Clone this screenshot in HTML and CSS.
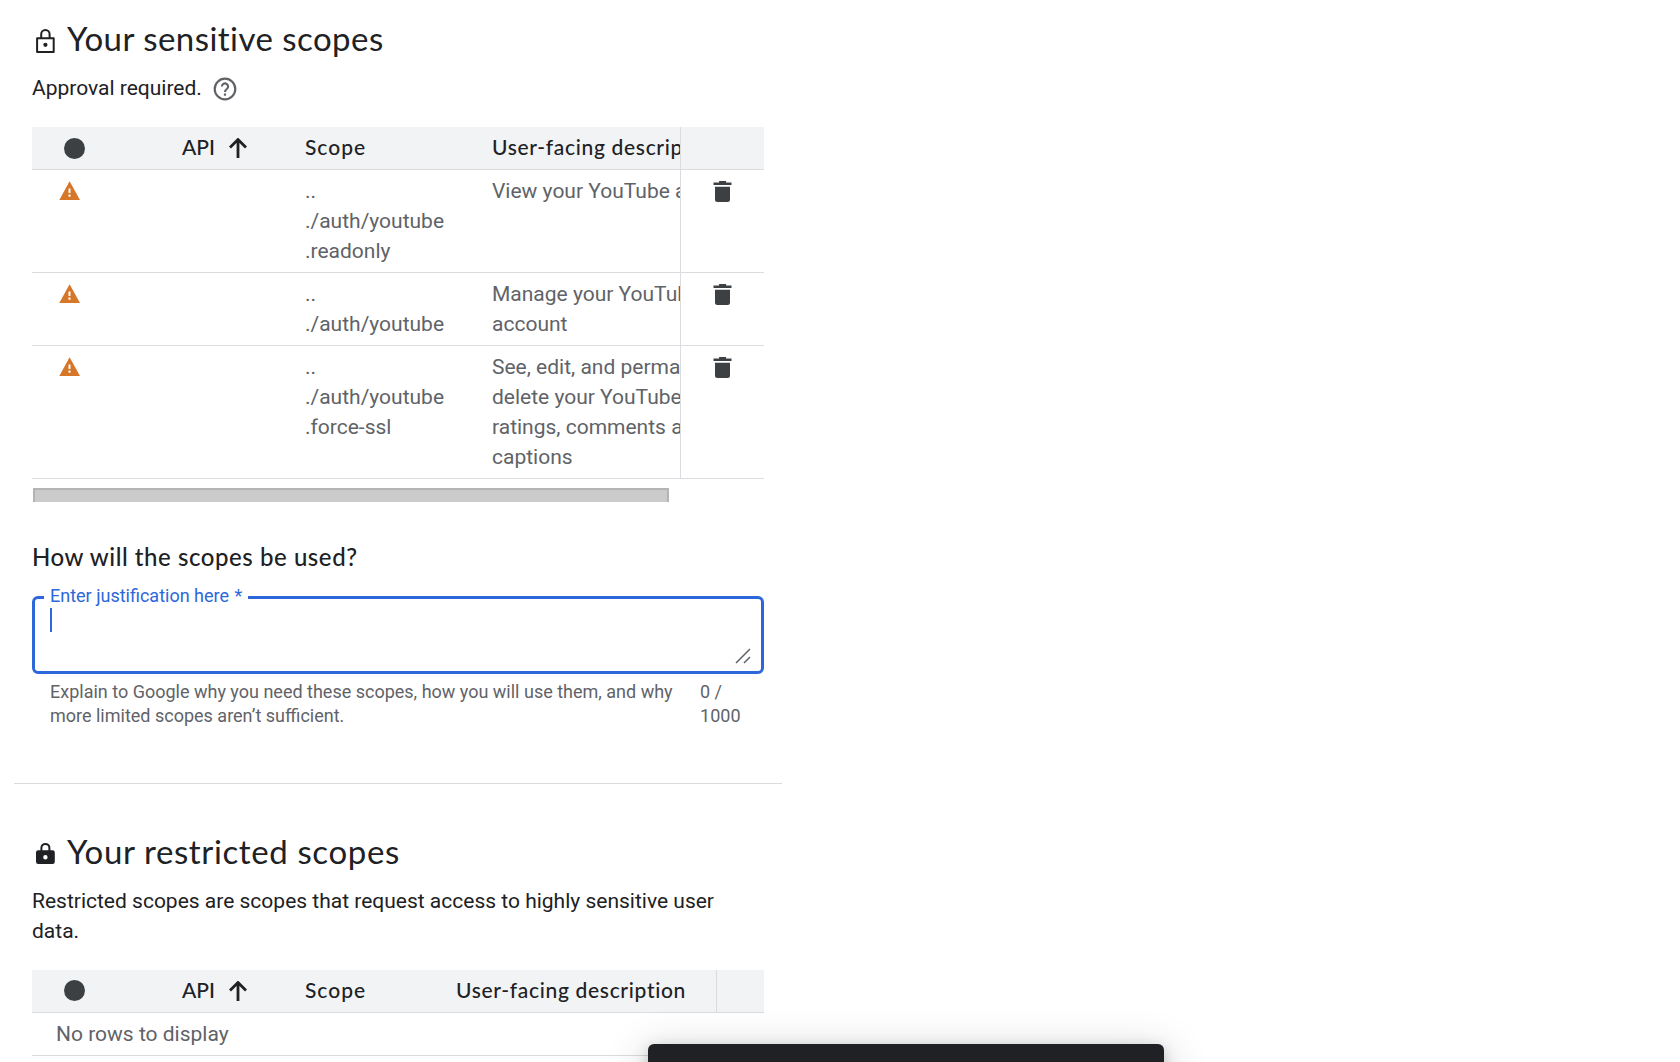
FILE: index.html
```html
<!DOCTYPE html>
<html lang="en">
<head>
<meta charset="utf-8">
<title>Scopes</title>
<link rel="stylesheet" href="styles.css">
</head>
<body>
<svg class="defs" aria-hidden="true">
  <symbol id="trash" viewBox="0 0 18 21"><path d="M5.6 0h7v1.4H18V4H0V1.4h5.6zM1.5 5.7h15V18.500q0 2.500-2.500 2.500H4q-2.500 0-2.500-2.500z"/></symbol>
  <symbol id="warn" viewBox="0 0 22 20"><path d="M10.600.2 21 18.900H.300z"/><path class="mark" d="M9.500 7.400h2v4.600h-2zM9.500 13.500h2v2.200h-2z"/></symbol>
  <symbol id="up" viewBox="0 0 18 20"><path d="M9 20V2M1 9.500l8-8 8 8" fill="none" stroke="currentColor" stroke-width="2.800"/></symbol>
</svg>
<main class="page">
  <section class="scopes">
    <h2 class="title"><svg class="lock" viewBox="0 0 20 26"><path d="M1.100 11.200h16.600v13.700H1.100zM5.200 11V7.300a4.200 4.200 0 0 1 8.400 0V11" fill="none" stroke="currentColor" stroke-width="2" stroke-linejoin="round"/><circle cx="9.400" cy="17.800" r="2.100"/></svg><span class="t-a">Your sensitive scopes</span></h2>
    <p class="lead">Approval required.<svg class="help" viewBox="0 0 24 24"><circle cx="12" cy="12" r="10.300" fill="none" stroke="currentColor" stroke-width="2.200"/><path d="M8.900 9.500a3.100 3.100 0 1 1 4.900 2.500c-1.200.9-1.800 1.400-1.800 2.900" fill="none" stroke="currentColor" stroke-width="2.100"/><path d="M10.900 16.500h2.200v2.200h-2.200z"/></svg></p>
    <div class="table wide">
      <div class="row head"><div class="cell pick"><i class="dot"></i></div><div class="cell api"><span>API</span><svg class="up"><use href="#up"/></svg></div><div class="cell name">Scope</div><div class="cell desc">User-facing description</div><div class="cell act"></div></div>
      <div class="row"><div class="cell pick"><svg class="warn"><use href="#warn"/></svg></div><div class="cell"></div><div class="cell">..<br>./auth/youtube<br>.readonly</div><div class="cell">View your YouTube account</div><div class="cell act"><svg class="trash"><use href="#trash"/></svg></div></div>
      <div class="row"><div class="cell pick"><svg class="warn"><use href="#warn"/></svg></div><div class="cell"></div><div class="cell">..<br>./auth/youtube</div><div class="cell">Manage your YouTube<br>account</div><div class="cell act"><svg class="trash"><use href="#trash"/></svg></div></div>
      <div class="row"><div class="cell pick"><svg class="warn"><use href="#warn"/></svg></div><div class="cell"></div><div class="cell">..<br>./auth/youtube<br>.force-ssl</div><div class="cell">See, edit, and permanently<br>delete your YouTube videos,<br>ratings, comments and<br>captions</div><div class="cell act"><svg class="trash"><use href="#trash"/></svg></div></div>
    </div>
    <div class="scrollbar"></div>
    <h3 class="question">How will the scopes be used?</h3>
    <div class="field"><span class="label">Enter justification here <span class="star">*</span></span><i class="caret"></i><svg class="grip" viewBox="0 0 16 16"><path d="M1 15 15 1M9 15l6-6" fill="none" stroke="currentColor" stroke-width="1.500"/></svg></div>
    <div class="hint"><span>Explain to Google why you need these scopes, how you will use them, and why<br>more limited scopes aren’t sufficient.</span><span>0 /<br>1000</span></div>
  </section>
  <hr class="divider">
  <section class="scopes second">
    <h2 class="title"><svg class="lock" viewBox="0 0 20 26"><path d="M5.400 12V7.900a4 4 0 0 1 8 0V12" fill="none" stroke="currentColor" stroke-width="2"/><path fill-rule="evenodd" d="M2.200 10.300h14.400q2.200 0 2.200 2.200v9.300q0 2.200-2.200 2.200H2.200Q0 24 0 21.800v-9.300q0-2.200 2.200-2.200zm7.200 4.700a2.200 2.200 0 1 0 0 4.400 2.200 2.200 0 0 0 0-4.400z"/></svg><span class="t-b">Your restricted scopes</span></h2>
    <p class="lead">Restricted scopes are scopes that request access to highly sensitive user<br>data.</p>
    <div class="table slim">
      <div class="row head"><div class="cell pick"><i class="dot"></i></div><div class="cell api"><span>API</span><svg class="up"><use href="#up"/></svg></div><div class="cell name">Scope</div><div class="cell desc">User-facing description</div><div class="cell act"></div></div>
      <div class="row empty">No rows to display</div>
    </div>
  </section>
</main>
<div class="snackbar"></div>
</body>
</html>
```
FILE: styles.css
```css
* { box-sizing: border-box; }
body { margin: 0; height: 1062px; overflow: hidden; background: #fff; color: #202124; font: 21px/30px Roboto, sans-serif; }
h2, h3, p { margin: 0; }
svg { fill: currentColor; flex: none; }
.defs { position: absolute; width: 0; height: 0; }
.page { width: 782px; }
.scopes { padding: 20px 18px 0 32px; }
.title { display: flex; align-items: center; height: 40px; gap: 11px; padding-left: 4px; font: 400 33px/40px Lato, sans-serif; white-space: nowrap; }
.title span { padding-bottom: 4px; }
.t-a { letter-spacing: .46px; }
.t-b { letter-spacing: .62px; }
.lock { width: 20px; height: 26px; }
.lead { margin-top: 13px; display: flow-root; }
.help { width: 24px; height: 24px; margin-left: 11.5px; vertical-align: -6px; color: #5f6368; }
.table { width: 732px; margin-top: 24px; }
.wide { --cols: 132px 123px 187px 206px 84px; }
.slim { --cols: 132px 123px 151px 278px 48px; }
.row { display: grid; grid-template-columns: var(--cols); border-bottom: 1px solid #dadce0; color: #5f6368; }
.cell { padding: 6px 0 6px 18px; white-space: nowrap; overflow: hidden; }
.head { height: 43px; background: #f1f3f4; color: #202124; font: 500 21px/30px Lato, sans-serif; }
.head .name, .head .desc { padding-top: 5px; }
.name { letter-spacing: 1px; }
.desc { letter-spacing: .68px; }
.act { border-left: 1px solid #dadce0; }
.pick { padding-left: 27px; }
.head .pick { padding: 11px 0 0 32px; }
.slim .head .pick { padding-top: 10px; }
.dot { display: block; width: 21px; height: 21px; border-radius: 50%; background: #3c4043; }
.api { display: flex; align-items: center; gap: 14px; }
.api span { padding-bottom: 2px; }
.up { width: 18px; height: 20px; }
.warn { display: block; width: 22px; height: 20px; margin-top: 5px; color: #d67629; }
.mark { fill: #fff; }
.trash { display: block; width: 19px; height: 21px; margin: 5px 0 0 14px; color: #3c4043; }
.scrollbar { width: 636px; height: 14px; margin: 9px 0 0 1px; background: #cbcbcb; border: 1px solid #b4b4b4; border-width: 2px 2px 0; }
.question { margin-top: 39px; font: 500 24px/32px Lato, sans-serif; letter-spacing: .56px; white-space: nowrap; }
.field { position: relative; height: 78px; margin-top: 23px; border: 3px solid #2d67da; border-radius: 6px; }
.label { position: absolute; left: 9px; top: -15.5px; padding: 0 6px; background: #fff; color: #2d67da; font-size: 18px; line-height: 24px; }
.star { margin-left: 1px; }
.caret { position: absolute; left: 15px; top: 9px; width: 2px; height: 24px; background: #2d67da; }
.grip { position: absolute; right: 10px; bottom: 7px; width: 16px; height: 16px; color: #5f6368; }
.hint { display: flex; justify-content: space-between; padding: 6px 23.5px 0 18px; color: #5f6368; font-size: 18px; line-height: 24px; }
.divider { height: 1px; margin: 55px 0 0 14px; border: 0; background: #dadce0; }
.second { padding-top: 49px; }
.empty { display: block; padding: 6px 24px; height: 43px; }
.snackbar { position: absolute; left: 648px; top: 1044px; width: 516px; height: 40px; border-radius: 6px; background: #202124; box-shadow: 0 4px 15px rgba(0,0,0,.2), 0 9px 42px 6px rgba(0,0,0,.14); }
```
